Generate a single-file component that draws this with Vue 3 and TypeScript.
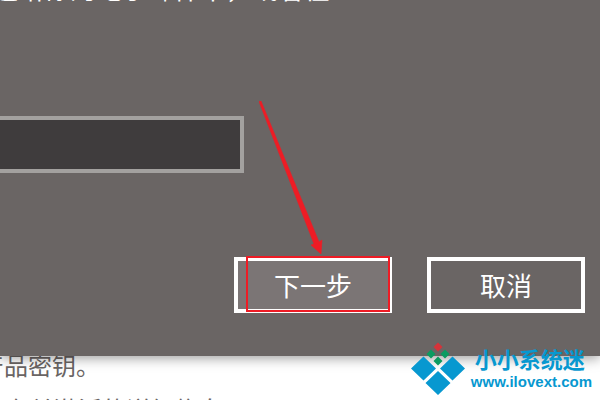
<script setup lang="ts">
import { ref } from 'vue'

const productKey = ref('')
</script>

<template>
  <div class="screen">
    <main class="dialog">
      <label class="hint" for="product-key">送给你的电子邮件中，或者在</label>
      <input id="product-key" v-model="productKey" class="key" type="text" autocomplete="off" />
      <div class="actions">
        <button class="btn primary" type="button">
          下一步
          <span class="marker"></span>
        </button>
        <button class="btn" type="button">取消</button>
      </div>
      <svg class="arrow" viewBox="0 0 70 160" aria-hidden="true">
        <path d="M0 0.500 L2 0 L60 141 L63 139 L62 153 L52 144 L55 143 Z" fill="#ee1c25" stroke="#ee1c25" stroke-width="0.600" />
      </svg>
    </main>
    <section class="behind">
      <p class="line">产品密钥。</p>
      <p class="line second">有关激活的详细信息</p>
    </section>
    <a class="brand" href="#">
      <svg class="logo" viewBox="0 0 54 54" aria-hidden="true">
        <path d="M27 0.500 L31.500 5 L27 9.500 L22.500 5 Z" fill="#d5333a" />
        <path d="M20 7.500 L24.500 12 L20 16.500 L15.500 12 Z M34 7.500 L38.500 12 L34 16.500 L29.500 12 Z M27 14.500 L31.500 19 L27 23.500 L22.500 19 Z" fill="#0b9b61" />
        <path d="M12.500 14.500 L25 26.500 L12.500 38.500 L0 26.500 Z M41.500 14.500 L54 26.500 L41.500 38.500 L29 26.500 Z M27 29 L39.500 41 L27 53 L14.500 41 Z" fill="#0798d0" />
      </svg>
      <span class="words">
        <span class="name">小小系统迷</span>
        <span class="site">www.ilovext.com</span>
      </span>
    </a>
  </div>
</template>

<style>
body {
  margin: 0;
  background: #fff;
}
</style>

<style scoped>
.screen {
  position: relative;
  height: 100vh;
  overflow: hidden;
  display: flex;
  flex-direction: column;
  font-family: "Noto Sans CJK SC", sans-serif;
}

.dialog {
  position: relative;
  z-index: 1;
  display: flex;
  flex-direction: column;
  align-items: flex-start;
  padding: 0 15px 43px 0;
  background: #6a6564;
  box-shadow: 0 2px 12px rgba(0, 0, 0, 0.4);
}

.hint {
  margin: -32px 0 108px -8px;
  font-size: 26px;
  line-height: 40px;
  white-space: nowrap;
  color: #fff;
}

.key {
  box-sizing: border-box;
  width: 252px;
  height: 57px;
  margin-left: -8px;
  padding: 0 12px;
  border: 4px solid #a3a19f;
  border-radius: 0;
  background: #3f3c3d;
  color: #fff;
  font: inherit;
  font-size: 26px;
  outline: none;
}

.actions {
  align-self: stretch;
  display: flex;
  justify-content: flex-end;
  gap: 35px;
  margin-top: 84px;
}

.btn {
  position: relative;
  box-sizing: border-box;
  width: 158px;
  height: 56px;
  padding: 0;
  border: 4px solid #fff;
  border-radius: 0;
  background: transparent;
  color: #fff;
  font: inherit;
  font-size: 26px;
  line-height: 48px;
}

.primary {
  background: #7b7575;
}

.marker {
  position: absolute;
  inset: -5px -2px -3px 8px;
  border: 2px solid #ee1c25;
}

.arrow {
  position: absolute;
  left: 259px;
  top: 101px;
  width: 70px;
  height: 160px;
}

.behind {
  padding-left: 4px;
  color: #6a6564;
}

.line {
  margin: -11px 0 0 -24px;
  font-size: 24px;
  line-height: 40px;
  white-space: nowrap;
}

.second {
  margin: 4px 0 0 2px;
}

.brand {
  position: absolute;
  z-index: 2;
  right: 8px;
  bottom: 4px;
  display: flex;
  align-items: center;
  gap: 6px;
  color: #0798d0;
  text-decoration: none;
}

.logo {
  width: 54px;
  height: 54px;
}

.words {
  display: flex;
  flex-direction: column;
}

.name {
  padding-left: 4px;
  font-size: 22px;
  font-weight: 700;
  line-height: 26px;
}

.site {
  font-family: "Liberation Sans", sans-serif;
  font-size: 15px;
  font-weight: 700;
  line-height: 22px;
}
</style>
